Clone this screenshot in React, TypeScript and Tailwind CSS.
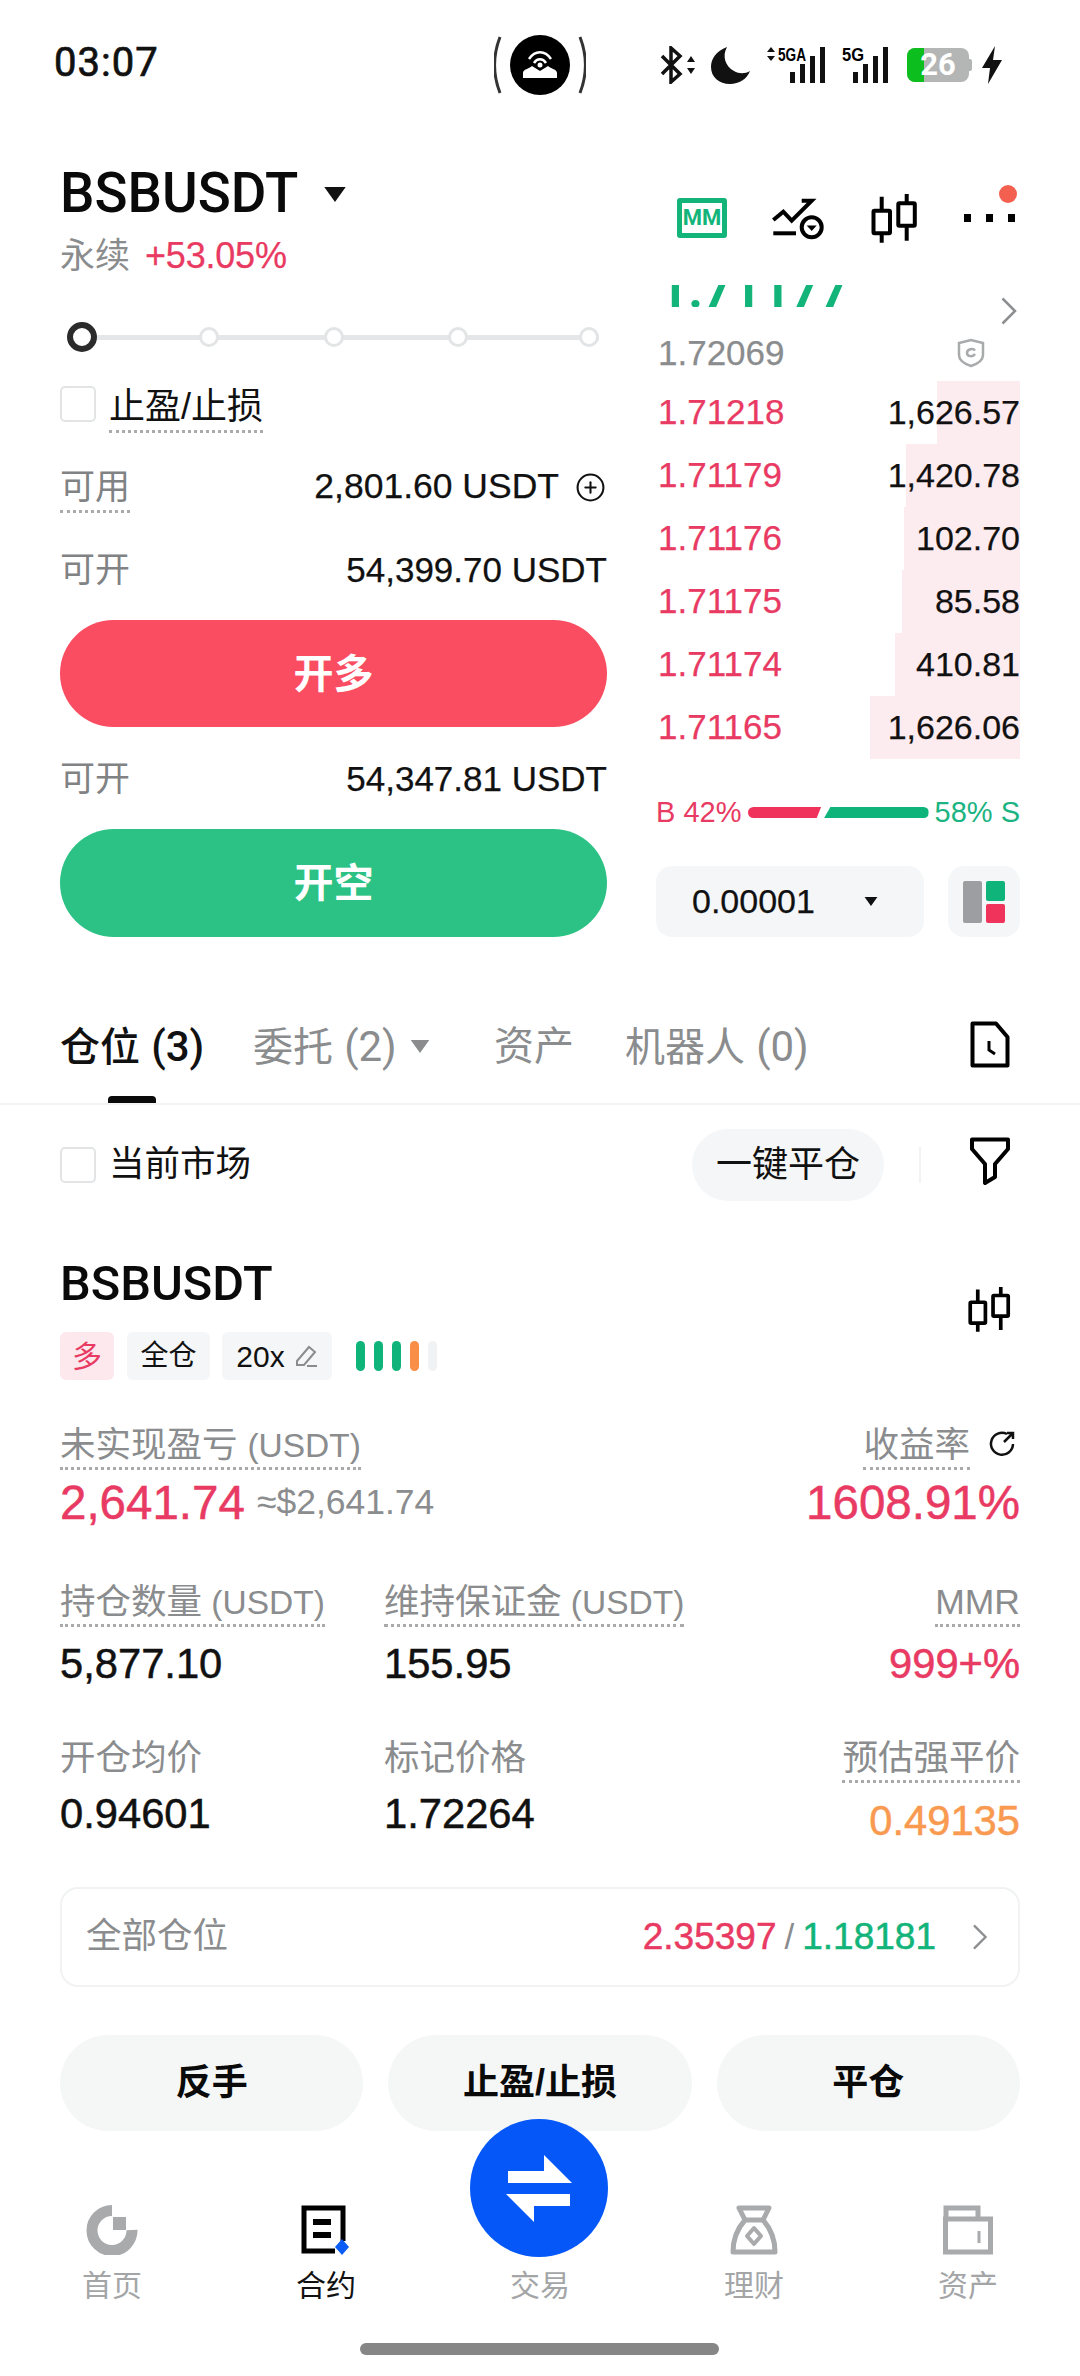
import { CirclePlus } from "lucide-react";

const asks = [
  { price: "1.71218", size: "1,626.57", bar: "w-[83px]" },
  { price: "1.71179", size: "1,420.78", bar: "w-[114px]" },
  { price: "1.71176", size: "102.70", bar: "w-[116px]" },
  { price: "1.71175", size: "85.58", bar: "w-[118px]" },
  { price: "1.71174", size: "410.81", bar: "w-[125px]" },
  { price: "1.71165", size: "1,626.06", bar: "w-[150px]" },
];

// the numbers sit between regular and bold in the picture
const medium = "[-webkit-text-stroke:0.5px_currentColor]";
const semi = "[-webkit-text-stroke:0.25px_currentColor]";

function Candles({ className }: { className: string }) {
  return (
    <svg viewBox="0 0 50 56" className={className} fill="none" stroke="#000" strokeWidth="4">
      <path d="M11.7 6.7V20.7M11.7 43.3V52.7M36.7 4V13.3M36.7 35.7V50.7" />
      <rect x="3.5" y="20.7" width="16.5" height="22.6" rx="1" />
      <rect x="28.3" y="13.3" width="16.5" height="22.4" rx="1" />
    </svg>
  );
}

function Caret({ className }: { className: string }) {
  return (
    <svg viewBox="0 0 20 14" className={className}>
      <path d="M0 0H20L10 14Z" fill="currentColor" />
    </svg>
  );
}

function Chevron({ className }: { className: string }) {
  return (
    <svg viewBox="0 0 16 28" className={className} fill="none" stroke="#8c8e90" strokeWidth="2.5">
      <path d="M1.5 1.5L14 14L1.5 26.5" />
    </svg>
  );
}

function Signal({ label, wide }: { label: string; wide?: boolean }) {
  return (
    <svg viewBox={wide ? "0 0 62 38" : "0 0 48 38"} className={wide ? "w-[62px] h-[38px]" : "w-[48px] h-[38px]"}>
      <text x={wide ? 13 : 0} y="15" fontSize="18" fontWeight="700" fontFamily="Liberation Sans" textLength={wide ? 28 : 22} lengthAdjust="spacingAndGlyphs">
        {label}
      </text>
      {wide && <path d="M6 1L10 6H2ZM6 15L2 10H10Z" fill="#111" />}
      {(wide ? [25, 35, 45, 55] : [11, 21, 31, 41]).map((x, i) => (
        <rect key={x} x={x} y={[26, 18, 10, 1][i]} width="5" height={[11, 19, 27, 36][i]} fill="#111" />
      ))}
    </svg>
  );
}

function StatusBar() {
  return (
    <div className="h-[124px] flex items-center pl-[54px] relative">
      <span className="text-[40px] leading-none tracking-[1px] font-normal [font-family:Roboto,sans-serif] text-[#111] mt-[2px] w-[108px] [-webkit-text-stroke:0.7px_currentColor]">03:07</span>
      {/* hotspot pill */}
      <svg viewBox="0 0 92 60" className="w-[92px] h-[60px] ml-[332px] mt-[6px]">
        <path d="M6 2C-1 20 -1 40 6 58M86 2C93 20 93 40 86 58" fill="none" stroke="#333" strokeWidth="3" />
        <circle cx="46" cy="30" r="30" fill="#000" />
        <path d="M29 43V38C29 34 35 34 38 31L46 36L54 31C57 34 63 34 63 38V43Z" fill="#fff" />
        <path d="M35 24C41 15 51 15 57 24M40 28C43 23 49 23 52 28" fill="none" stroke="#fff" strokeWidth="2.5" />
        <circle cx="46" cy="30" r="2.5" fill="#fff" />
      </svg>
      <div className="flex items-center ml-[74px] h-[40px] mt-[5px]">
        <svg viewBox="0 0 36 38" className="w-[36px] h-[38px]">
          <path d="M2 10L20 28L11 36V2L20 10L2 28" fill="none" stroke="#111" strokeWidth="3.5" />
          <path d="M31 10L35 16H27ZM31 28L27 22H35Z" fill="#111" />
        </svg>
        <svg viewBox="0 0 40 38" className="w-[40px] h-[38px] ml-[15px]">
          <path d="M16 1C5 5 0 13 0 21C0 31 8 38 19 38C28 38 36 33 39 25C34 28 28 28 23 25C14 20 11 10 16 1Z" fill="#111" />
        </svg>
        <div className="ml-[14px]">
          <Signal label="5GA" wide />
        </div>
        <div className="ml-[15px]">
          <Signal label="5G" />
        </div>
        {/* battery */}
        <div className="relative ml-[17px] w-[62px] h-[34px] rounded-[8px] bg-[#b4b6b6] overflow-hidden flex items-center justify-center">
          <div className="absolute left-0 top-0 bottom-0 w-[17px] bg-[#0cbf1e]" />
          <span className="relative text-white font-bold text-[31px] leading-none [font-family:Roboto,sans-serif]">26</span>
        </div>
        <div className="w-[3px] h-[12px] bg-[#b4b6b6] rounded-r-[2px]" />
        <svg viewBox="0 0 20 38" className="w-[20px] h-[38px] ml-[10px]">
          <path d="M13 0L0 22H8L6 38L20 14H11Z" fill="#111" />
        </svg>
      </div>
    </div>
  );
}

function Slider() {
  return (
    <div className="h-[100px] pt-[2px] flex items-center relative">
      <div className="absolute left-[20px] right-[8px] h-[5px] bg-[#e4e6e7]" />
      <div className="relative w-full h-[30px]">
        <div className="absolute left-[7px] top-0 w-[30px] h-[30px] rounded-full border-[6px] border-[#2b2b2b] bg-white" />
        {/* dots */}
        <div className="absolute left-[139px] top-[5px] w-[20px] h-[20px] rounded-full border-[3px] border-[#e2e4e5] bg-white" />
        <div className="absolute left-[264px] top-[5px] w-[20px] h-[20px] rounded-full border-[3px] border-[#e2e4e5] bg-white" />
        <div className="absolute left-[388px] top-[5px] w-[20px] h-[20px] rounded-full border-[3px] border-[#e2e4e5] bg-white" />
        <div className="absolute left-[519px] top-[5px] w-[20px] h-[20px] rounded-full border-[3px] border-[#e2e4e5] bg-white" />
      </div>
    </div>
  );
}

function TradeForm() {
  return (
    <div className="w-[547px] shrink-0">
      <div className="h-[66px] flex items-center">
        <span className="text-[54.6px] leading-none font-medium [font-family:Roboto,sans-serif] text-[#0a0a0a] w-[237px]">BSBUSDT</span>
        <Caret className="w-[22px] h-[15px] ml-[27px] text-[#111] mt-[2px]" />
      </div>
      <div className="h-[60px] flex items-center">
        <span className="text-[35px] text-[#8a8c8e]">永续</span>
        <span className={`text-[36px] text-[#e93a62] ml-[15px] tracking-[-0.2px] ${semi}`}>+53.05%</span>
      </div>
      <Slider />
      <div className="h-[51px] flex items-start">
        <div className="w-[36px] h-[36px] rounded-[5px] border-2 border-[#e2e4e5]" />
        <span className="ml-[13px] text-[36px] leading-[42px] h-[47px] border-b-[3px] border-dotted border-[#a8aaac] text-[#111]">止盈/止损</span>
      </div>
      <div className="h-[100px] flex items-center justify-between">
        <span className="text-[35px] leading-[48px] mt-[1px] h-[50px] border-b-[3px] border-dotted border-[#a8aaac] text-[#808284]">可用</span>
        <span className={`flex items-center text-[35.5px] text-[#111] mr-[-1px] ${semi}`}>
          2,801.60 USDT
          <CirclePlus className="w-[31px] h-[31px] ml-[16px] mr-[2px]" strokeWidth={1.6} />
        </span>
      </div>
      <div className="h-[66px] flex items-center justify-between">
        <span className="text-[35px] text-[#808284]">可开</span>
        <span className={`text-[35px] text-[#111] ${semi}`}>54,399.70 USDT</span>
      </div>
      <div className="h-[107px] mt-[17px] rounded-full bg-[#fa4d62] flex items-center justify-center text-white text-[40px] font-bold">开多</div>
      <div className="h-[102px] flex items-center justify-between pt-[3px]">
        <span className="text-[35px] text-[#808284]">可开</span>
        <span className={`text-[35px] text-[#111] ${semi}`}>54,347.81 USDT</span>
      </div>
      <div className="h-[108px] rounded-full bg-[#2dc285] flex items-center justify-center text-white text-[40px] font-bold">开空</div>
    </div>
  );
}

function OrderBook() {
  return (
    <div className="w-[364px] ml-[49px] shrink-0 relative">
      <div className="h-[56px] mt-[30px] flex items-center pl-[21px] relative">
        <div className="w-[50px] h-[40px] rounded-[3px] border-[5px] border-[#12b47a] flex items-center justify-center text-[#12b47a] text-[22px] font-bold leading-none [font-family:Roboto,sans-serif]">MM</div>
        <svg viewBox="0 -2 60 50" className="w-[60px] h-[50px] ml-[43px]" fill="none" stroke="#000" strokeWidth="4">
          <path d="M3.3 25L13.3 16.7L21.7 25.7L41.7 5.7H31.7" />
          <path d="M3.3 38.3H26" />
          <circle cx="41.7" cy="32.3" r="10" />
          <path d="M36.7 30.5H46.7L41.7 36Z" fill="#000" stroke="none" />
        </svg>
        <Candles className="w-[50px] h-[56px] ml-[40px]" />
        <div className="flex gap-[15px] ml-[44px]">
          <div className="w-[7px] h-[8px] bg-black" />
          <div className="w-[7px] h-[8px] bg-black" />
          <div className="w-[7px] h-[8px] bg-black" />
        </div>
        <div className="absolute top-[-5px] right-[3px] w-[18px] h-[18px] rounded-full bg-[#f4604f]" />
      </div>

      <div className="h-[22px] mt-[39px] overflow-hidden flex items-end pl-[3px]">
        <span className="text-[51px] leading-none font-bold [font-family:Roboto,sans-serif] text-[#12b47a] -mb-[8px]">1.71177</span>
      </div>
      <Chevron className="absolute right-[3px] top-[137px] w-[16px] h-[28px]" />

      <div className="h-[59px] mt-[15px] flex items-center justify-between pl-[2px] relative">
        <span className={`text-[35px] leading-none mt-[2px] text-[#8a8c8e] ${semi}`}>1.72069</span>
        <svg viewBox="0 0 28 30" className="w-[28px] h-[30px] mr-[35px] mt-[3px]" fill="none" stroke="#a8aaac" strokeWidth="2.5">
          <path d="M2 5L14 2L26 5V17C26 23 20 26 14 28C8 26 2 23 2 17Z" />
          <path d="M18 12.5C16 10 10 11 10 15C10 19 16 19 18 16" />
        </svg>
      </div>

      {asks.map((a) => (
        <div key={a.price} className="h-[63px] flex items-center justify-between relative pl-[2px]">
          <div className={`absolute right-0 top-0 bottom-0 bg-[#fdecef] ${a.bar}`} />
          <span className={`relative text-[35px] text-[#e83a62] ${semi}`}>{a.price}</span>
          <span className={`relative text-[34px] text-[#111] ${semi}`}>{a.size}</span>
        </div>
      ))}

      <div className="h-[107px] flex items-center justify-between text-[29px]">
        <span className="text-[#e83a62] w-[92px] whitespace-nowrap">B 42%</span>
        <div className="w-[74px] h-[11px] bg-[#f0335a] rounded-l-full [clip-path:polygon(0_0,100%_0,94%_100%,0_100%)]" />
        <div className="w-[105px] h-[11px] ml-[3px] bg-[#0fb47a] rounded-r-full [clip-path:polygon(6%_0,100%_0,100%_100%,0_100%)]" />
        <span className="text-[#1bb482] ml-[6px] whitespace-nowrap">58% S</span>
      </div>

      <div className="flex items-center justify-between h-[71px]">
        <div className="w-[268px] h-[71px] rounded-[16px] bg-[#f5f6f7] flex items-center pl-[36px]">
          <span className={`text-[34px] text-[#111] w-[129px] ${semi}`}>0.00001</span>
          <Caret className="w-[16px] h-[9px] ml-[42px] text-[#111]" />
        </div>
        <div className="w-[72px] h-[71px] rounded-[16px] bg-[#f5f6f7] flex items-center justify-center gap-[4px]">
          <div className="w-[19px] h-[42px] bg-[#9c9ea1] rounded-[2px]" />
          <div className="flex flex-col gap-[3px]">
            <div className="w-[19px] h-[20px] rounded-[2px] bg-[#0fb47a]" />
            <div className="w-[19px] h-[19px] rounded-[2px] bg-[#f0335a]" />
          </div>
        </div>
      </div>
    </div>
  );
}

function Tabs() {
  return (
    <div className="h-[103px] mt-[65px] pb-[13px] flex items-center relative pl-[60px] text-[40px] text-[#8a8c8e] border-b-2 border-[#f2f3f3] whitespace-nowrap">
      <span className="text-[#111] font-medium w-[193px]">
        仓位 <span className="[font-family:Roboto,sans-serif] text-[42px]">(3)</span>
      </span>
      <span className="w-[143px]">
        委托 <span className="[font-family:Roboto,sans-serif] text-[42px]">(2)</span>
      </span>
      <Caret className="w-[20px] h-[13px] ml-[14px] text-[#8a8c8e]" />
      <span className="ml-[64px] w-[131px]">资产</span>
      <span>
        机器人 <span className="[font-family:Roboto,sans-serif] text-[42px]">(0)</span>
      </span>
      <svg viewBox="0 0 40 47" className="absolute right-[70px] top-[19px] w-[40px] h-[47px]" fill="none" stroke="#000" strokeWidth="4">
        <path d="M2.5 2.5H26L37.5 16V44.5H2.5Z" strokeLinejoin="round" />
        <path d="M19 20V29L25 33" strokeWidth="3" />
      </svg>
      <div className="absolute left-[108px] bottom-0 w-[48px] h-[7px] rounded-t-[4px] bg-[#0a0a0a]" />
    </div>
  );
}

function Field({ label, suffix, value, tone, align, dotted, gap }: { label: string; suffix?: string; value: string; tone?: string; align?: string; dotted?: boolean; gap: string }) {
  return (
    <div className={`flex flex-col ${align === "right" ? "items-end" : "items-start"}`}>
      <span className={`text-[35.5px] leading-[40px] text-[#8a8c8e] whitespace-nowrap h-[45px] ${dotted ? "border-b-[3px] border-dotted border-[#a8aaac]" : ""}`}>
        {label}
        {suffix && <span className="text-[33.5px]"> {suffix}</span>}
      </span>
      <span className={`text-[41.7px] leading-[48px] ${gap} ${medium} ${tone ?? "text-[#111]"}`}>{value}</span>
    </div>
  );
}

function PositionCard() {
  return (
    <div className="px-[60px]">
      <div className="flex items-center justify-between h-[72px] mt-[24px]">
        <div className="flex items-center">
          <div className="w-[36px] h-[36px] rounded-[5px] border-2 border-[#e2e4e5]" />
          <span className="ml-[13px] text-[35.5px] text-[#111]">当前市场</span>
        </div>
        <div className="flex items-center">
          <div className="w-[192px] h-[72px] rounded-full bg-[#f5f6f7] flex items-center justify-center text-[36px] text-[#111]">一键平仓</div>
          <div className="w-[2px] h-[36px] bg-[#f2f3f3] ml-[35px]" />
          <svg viewBox="0 0 42 48" className="w-[42px] h-[48px] ml-[48px] mr-[9px] -mt-[9px]" fill="none" stroke="#000" strokeWidth="4" strokeLinejoin="round">
            <path d="M3 2.5H39V12L26 27V40L16 46V27L3 12Z" />
          </svg>
        </div>
      </div>

      <div className="flex justify-between mt-[52px] h-[62px]">
        <span className="text-[48.7px] leading-[62px] font-medium [font-family:Roboto,sans-serif] text-[#0a0a0a]">BSBUSDT</span>
        <Candles className="w-[46px] h-[52px] mr-[7px] mt-[30px]" />
      </div>

      <div className="flex items-center mt-[17px] h-[48px]">
        <div className="w-[54px] h-[48px] rounded-[6px] bg-[#fde8ee] text-[#e83a62] text-[30px] flex items-center justify-center">多</div>
        <div className="w-[83px] h-[48px] ml-[13px] rounded-[6px] bg-[#f5f6f7] text-[#111] text-[28px] flex items-center justify-center">全仓</div>
        <div className="w-[110px] h-[48px] ml-[12px] rounded-[6px] bg-[#f5f6f7] text-[#111] text-[30px] flex items-center justify-center">
          20x
          <svg viewBox="0 0 24 24" className="w-[24px] h-[24px] ml-[9px]" fill="none" stroke="#8a8c8e" strokeWidth="2">
            <path d="M3 17L15 3L21 8L10 21H3ZM13 22H23" />
          </svg>
        </div>
        <div className="flex gap-[9px] ml-[24px]">
          <div className="w-[9px] h-[30px] rounded-full bg-[#0fb47a]" />
          <div className="w-[9px] h-[30px] rounded-full bg-[#0fb47a]" />
          <div className="w-[9px] h-[30px] rounded-full bg-[#0fb47a]" />
          <div className="w-[9px] h-[30px] rounded-full bg-[#f98f46]" />
          <div className="w-[9px] h-[30px] rounded-full bg-[#f1f2f3]" />
        </div>
      </div>

      {/* pnl */}
      <div className="flex justify-between mt-[45px] h-[45px]">
        <span className="text-[35.5px] leading-[40px] text-[#8a8c8e] border-b-[3px] border-dotted border-[#a8aaac]">
          未实现盈亏 <span className="text-[33.5px]">(USDT)</span>
        </span>
        <span className="flex items-start">
          <span className="text-[35.5px] leading-[40px] text-[#8a8c8e] border-b-[3px] border-dotted border-[#a8aaac] h-[45px]">收益率</span>
          <svg viewBox="0 0 28 28" className="w-[28px] h-[28px] ml-[18px] mt-[5px] mr-[4px]" fill="none" stroke="#111" strokeWidth="2.5">
            <path d="M19 4A11 11 0 1 0 25 14M16 12L25 3M19 3H25V9" />
          </svg>
        </span>
      </div>
      <div className="flex items-center justify-between h-[60px] mt-[3px]">
        <span className="flex items-center">
          <span className={`text-[47.5px] text-[#e83a62] ${medium}`}>2,641.74</span>
          <span className="text-[35.5px] text-[#8a8c8e] ml-[12px]">≈$2,641.74</span>
        </span>
        <span className={`text-[47.5px] text-[#e83a62] ${medium}`}>1608.91%</span>
      </div>

      <div className="grid grid-cols-[324px_1fr_auto] mt-[49px]">
        <Field label="持仓数量" suffix="(USDT)" value="5,877.10" dotted gap="mt-[13px]" />
        <Field label="维持保证金" suffix="(USDT)" value="155.95" dotted gap="mt-[13px]" />
        <Field label="MMR" value="999+%" tone="text-[#e83a62]" align="right" dotted gap="mt-[13px]" />
      </div>
      <div className="grid grid-cols-[324px_1fr_auto] mt-[50px]">
        <Field label="开仓均价" value="0.94601" gap="mt-[7px]" />
        <Field label="标记价格" value="1.72264" gap="mt-[7px]" />
        <Field label="预估强平价" value="0.49135" tone="text-[#f99a50]" align="right" dotted gap="mt-[14px]" />
      </div>

      <div className="h-[100px] mt-[42px] rounded-[18px] border-2 border-[#f1f2f3] flex items-center pl-[24px] pr-[30px]">
        <span className="text-[35.5px] text-[#8a8c8e]">全部仓位</span>
        <span className={`ml-auto text-[37px] text-[#e83a62] ${medium}`}>2.35397</span>
        <span className="text-[35px] text-[#8a8c8e] mx-[8px]">/</span>
        <span className={`text-[37px] text-[#12b47a] ${medium}`}>1.18181</span>
        <Chevron className="w-[16px] h-[26px] ml-[36px]" />
      </div>

      <div className="grid grid-cols-3 gap-[25px] mt-[48px]">
        {["反手", "止盈/止损", "平仓"].map((t) => (
          <div key={t} className="h-[96px] rounded-full bg-[#f5f6f6] flex items-center justify-center text-[36px] font-bold text-[#0a0a0a]">
            {t}
          </div>
        ))}
      </div>
    </div>
  );
}

function NavItem({ label, active, children }: { label: string; active?: boolean; children?: React.ReactNode }) {
  return (
    <div className="w-[214px] flex flex-col items-center">
      <div className="h-[52px] flex items-center justify-center">{children}</div>
      <span className={`text-[30px] leading-[36px] mt-[12px] ${active ? "text-[#111]" : "text-[#a3a5a7]"}`}>{label}</span>
    </div>
  );
}

function BottomNav() {
  return (
    <div className="absolute left-[5px] right-0 top-[2204px] flex">
      <NavItem label="首页">
        <svg viewBox="0 0 52 50" className="w-[52px] h-[50px]" fill="none" stroke="#a8aaac" strokeWidth="11">
          <path d="M26 5.5A20 20 0 1 0 46 25" />
          <rect x="27" y="12" width="13" height="13" fill="#a8aaac" stroke="none" />
        </svg>
      </NavItem>
      <NavItem label="合约" active>
        <svg viewBox="0 0 50 50" className="w-[50px] h-[50px]" fill="none">
          <path d="M34 46H3V3H42V36" stroke="#000" strokeWidth="5" />
          <path d="M12 14H30V20H12ZM12 27H30V33H12Z" fill="#000" />
          <path d="M41 34L48 42L41 50L34 42Z" fill="#0b5cf5" />
        </svg>
      </NavItem>
      <NavItem label="交易" />
      <NavItem label="理财">
        <svg viewBox="0 0 48 50" className="w-[48px] h-[50px]" fill="none" stroke="#a8aaac" strokeWidth="5" strokeLinejoin="round">
          <path d="M9 3H39L33 15H15Z" />
          <path d="M15 15C7 24 3 33 3 47H45C45 33 41 24 33 15" />
          <path d="M24 23L31 31L24 39L17 31Z" strokeWidth="4" />
        </svg>
      </NavItem>
      <NavItem label="资产">
        <svg viewBox="0 0 50 50" className="w-[50px] h-[50px]" fill="none" stroke="#a8aaac" strokeWidth="5">
          <path d="M3 15V3H35V15" />
          <path d="M2.5 14H47.5V47H2.5Z" />
          <path d="M36 26V38" strokeWidth="3" />
        </svg>
      </NavItem>
    </div>
  );
}

export default function App() {
  return (
    <div className="relative w-[1080px] h-[2376px] overflow-hidden bg-white [font-family:'Liberation_Sans','Noto_Sans_CJK_SC',sans-serif]">
      <StatusBar />

      <div className="flex pl-[60px] mt-[36px]">
        <TradeForm />
        <OrderBook />
      </div>

      <Tabs />
      <PositionCard />

      {/* trade button floats over the action row */}
      <div className="absolute left-[470px] top-[2119px] w-[138px] h-[138px] rounded-full bg-[#0557f7]">
        <svg viewBox="0 0 138 138" className="w-full h-full">
          <path d="M74 36L102 64H38V52H74Z M36 75H100V87H64V103Z" fill="#fff" />
        </svg>
      </div>

      <BottomNav />

      <div className="absolute left-[360px] top-[2343px] w-[359px] h-[12px] rounded-full bg-[#868686]" />
    </div>
  );
}
